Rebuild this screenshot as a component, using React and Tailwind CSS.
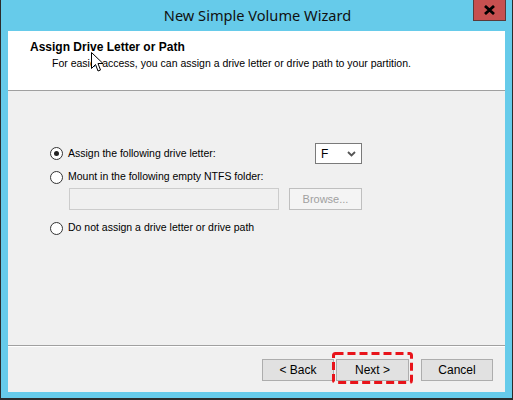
export default function App() {
  const ui = { fontFamily: '"Liberation Sans", Arial, sans-serif' };

  return (
    <div className="flex h-[400px] w-[513px] flex-col border-x border-b-2 border-[#2b2b2b] bg-[#66cbea]" style={ui}>
      {/* title bar */}
      <div className="relative flex h-[31px] shrink-0 items-center justify-center">
        <span className="pl-[2px] text-[14.6px] text-[#111]" style={{ fontFamily: '"Noto Sans", "Open Sans", sans-serif' }}>
          New Simple Volume Wizard
        </span>
        <div className="absolute right-[6px] top-0 flex h-[21px] w-[33px] items-center justify-center border border-t-0 border-[#5b3a3a] bg-[#c75050]">
          <svg width="11" height="10" viewBox="0 0 11 10">
            <path d="M1 1 L10 9 M10 1 L1 9" stroke="#000" strokeWidth="2.8" />
          </svg>
        </div>
      </div>

      {/* client area */}
      <div className="relative mx-[7px] mb-[6px] flex flex-1 flex-col bg-[#f0f0f0]">
        <div className="h-[60px] shrink-0 border-b border-[#a0a0a0] bg-white pl-[22px] pt-[9px]">
          <div className="text-[12px] font-bold leading-[14px] text-black">Assign Drive Letter or Path</div>
          <div className="mt-[3px] pl-[22px] text-[10.5px] leading-[13px] text-black">
            For easier access, you can assign a drive letter or drive path to your partition.
          </div>
        </div>

        {/* mouse pointer */}
        <svg className="absolute left-[83px] top-[21px]" width="13" height="21" viewBox="0 0 13 21">
          <path d="M0.5 0.5 L0.5 16.5 L4.5 12.5 L7 19 L9.5 18 L7 11.5 L12 11.5 Z" fill="#fff" stroke="#000" strokeWidth="1" />
        </svg>

        <div className="flex flex-1 flex-col pl-[42px] pt-[52px] text-[10.5px] text-black">
          <div className="flex h-[21px] w-[312px] items-center">
            <Radio checked />
            <span className="ml-[5px] flex-1">Assign the following drive letter:</span>
            <div className="flex h-[21px] w-[47px] items-center justify-between border border-[#7a7a7a] bg-white pl-[5px] pr-[5px] text-[12px]">
              <span>F</span>
              <svg width="9" height="6" viewBox="0 0 9 6">
                <path d="M1 1 L4.5 4.5 L8 1" fill="none" stroke="#555" strokeWidth="1.8" />
              </svg>
            </div>
          </div>

          <div className="mt-[6px] flex h-[14px] items-center">
            <Radio />
            <span className="ml-[5px]">Mount in the following empty NTFS folder:</span>
          </div>

          <div className="mt-[4px] flex h-[22px] items-stretch pl-[19px]">
            <div className="w-[210px] border border-[#cccccc] bg-[#f0f0f0]" />
            <div className="ml-[10px] flex w-[73px] items-center justify-center border border-[#bfbfbf] bg-[#f4f4f4] text-[11px] text-[#a0a0a0]">
              Browse...
            </div>
          </div>

          <div className="mt-[11px] flex h-[14px] items-center">
            <Radio />
            <span className="ml-[5px]">Do not assign a drive letter or drive path</span>
          </div>
        </div>

        {/* footer */}
        <div className="flex h-[47px] shrink-0 items-start justify-end border-t border-[#a0a0a0] pr-[12px] pt-[13px] shadow-[inset_0_1px_0_#fff]">
          <Button className="w-[72px]">&lt; Back</Button>
          <div className="relative ml-[2px]">
            <Button className="w-[73px] border-[#3c7fb1]">Next &gt;</Button>
            <svg className="absolute left-[-4px] top-[-7px]" width="81" height="32" viewBox="0 0 81 32">
              <rect x="1.5" y="1.5" width="78" height="29" rx="2" fill="none" stroke="#e8141b" strokeWidth="3" strokeDasharray="8 4" />
            </svg>
          </div>
          <Button className="ml-[12px] w-[72px]">Cancel</Button>
        </div>
      </div>
    </div>
  );
}

function Radio({ checked }) {
  return (
    <span className="flex h-[13px] w-[13px] shrink-0 items-center justify-center rounded-full border border-[#333] bg-white">
      {checked ? <span className="h-[5px] w-[5px] rounded-full bg-[#222]" /> : null}
    </span>
  );
}

function Button({ children, className = "" }) {
  return (
    <div className={`flex h-[22px] items-center justify-center border border-[#adadad] bg-[#e1e1e1] text-[12px] text-black ${className}`}>
      {children}
    </div>
  );
}
